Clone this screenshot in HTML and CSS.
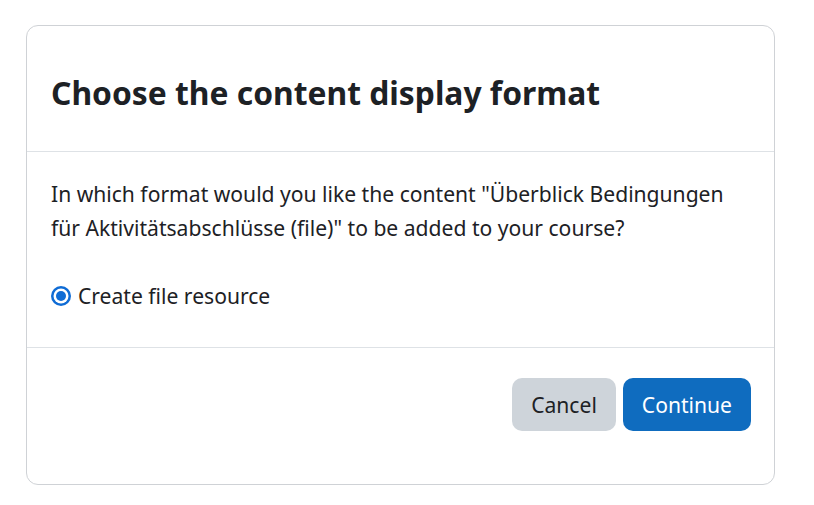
FILE: index.html
```html
<!DOCTYPE html>
<html>
<head>
<meta charset="utf-8">
<link rel="stylesheet" href="styles.css">
</head>
<body>
<div class="modal">
  <div class="modal-header">
    <h5 class="modal-title">Choose the content display format</h5>
  </div>
  <div class="modal-body">
    <p class="question">In which format would you like the content "Überblick Bedingungen für Aktivitätsabschlüsse (file)" to be added to your course?</p>
    <label class="option">
      <span class="radio"><span class="dot"></span></span>
      <span>Create file resource</span>
    </label>
  </div>
  <div class="modal-footer">
    <button class="btn btn-secondary">Cancel</button>
    <button class="btn btn-primary">Continue</button>
  </div>
</div>
</body>
</html>
```
FILE: styles.css
```css
html, body {
  margin: 0;
  padding: 0;
  background: #ffffff;
}
body {
  font-family: "Noto Sans", "Open Sans", sans-serif;
  color: #1d2125;
  font-size: 21.1px;
  padding: 25px 0 0 26px;
}
.modal {
  width: 747px;
  height: 458px;
  border: 1px solid #cfd2d6;
  border-radius: 12px;
  display: flex;
  flex-direction: column;
}
.modal-header {
  height: 126px;
  flex: none;
  border-bottom: 1px solid #dee2e6;
  display: flex;
  align-items: center;
  padding: 10px 24px 0 24px;
  box-sizing: border-box;
}
.modal-title {
  margin: 0;
  font-size: 31.8px;
  font-weight: 700;
  line-height: 1.2;
  color: #1d2125;
}
.modal-body {
  padding: 25px 24px 0 24px;
  height: 196px;
  flex: none;
  box-sizing: border-box;
  border-bottom: 1px solid #dee2e6;
}
.question {
  margin: 0 0 34px 0;
  line-height: 34px;
}
.option {
  display: flex;
  align-items: center;
  gap: 7px;
  line-height: 34px;
}
.radio {
  width: 20px;
  height: 20px;
  border-radius: 50%;
  background: #0f6cd5;
  display: flex;
  align-items: center;
  justify-content: center;
  box-sizing: border-box;
}
.dot {
  width: 10px;
  height: 10px;
  border-radius: 50%;
  background: #0f6cd5;
  box-shadow: 0 0 0 2.5px #ffffff;
}
.modal-footer {
  display: flex;
  justify-content: flex-end;
  align-items: flex-start;
  gap: 7px;
  padding: 30px 23px 0 0;
}
.btn {
  font-family: inherit;
  font-size: 21.1px;
  height: 53px;
  border: none;
  border-radius: 10px;
  padding: 0 19px;
  cursor: pointer;
}
.btn-secondary {
  background: #ced4da;
  color: #1d2125;
}
.btn-primary {
  background: #0f6cbf;
  color: #ffffff;
}
```
